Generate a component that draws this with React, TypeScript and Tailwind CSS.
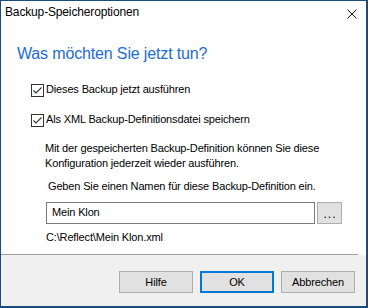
const Check = () => (
  <div className="w-[13px] h-[13px] border border-[#333333] bg-white flex items-center justify-center shrink-0 mt-[2px]">
    <svg width="11" height="11" viewBox="0 0 11 11">
      <path d="M1.5 5.5 L4 8 L9.5 2.5" fill="none" stroke="#333333" strokeWidth="1.1" />
    </svg>
  </div>
);

const Btn = ({ label, primary }: { label: string; primary?: boolean }) => (
  <button
    className={
      primary
        ? "w-[74px] h-[22px] bg-[#e1e1e1] border-2 border-[#0078d7] text-[11px] leading-[15px] tracking-[-0.15px] text-black"
        : "w-[74px] h-[22px] bg-[#e1e1e1] border border-[#adadad] text-[11px] leading-[15px] tracking-[-0.15px] text-black"
    }
  >
    {label}
  </button>
);

export default function App() {
  return (
    <div
      className="w-[368px] h-[308px] bg-[#1c4d7a] pl-px pt-px"
      style={{ fontFamily: '"Liberation Sans", Arial, sans-serif' }}
    >
      <div className="w-[365px] h-[305px] bg-white flex flex-col">
        {/* Title bar */}
        <div className="h-[30px] shrink-0 flex justify-between pl-[4px] pr-[9px] pt-[4px]">
          <span className="text-[12px] leading-[15px] tracking-[-0.15px] text-black">Backup-Speicheroptionen</span>
          <svg width="10" height="10" viewBox="0 0 10 10" className="mt-[4px]">
            <path d="M0.5 0.5 L9.5 9.5 M9.5 0.5 L0.5 9.5" stroke="#111111" strokeWidth="1" />
          </svg>
        </div>

        {/* Content */}
        <div className="h-[223px] shrink-0 pl-[16px] text-[11px] leading-[15px] tracking-[-0.15px] text-black">
          <h1 className="mt-[13px] text-[16px] leading-[20px] tracking-[-0.15px] text-[#1c6cd4]">Was möchten Sie jetzt tun?</h1>

          <div className="mt-[18px] ml-[14px] flex items-start">
            <Check />
            <span className="ml-[2px]">Dieses Backup jetzt ausführen</span>
          </div>
          <div className="mt-[15px] ml-[14px] flex items-start">
            <Check />
            <span className="ml-[2px]">Als XML Backup-Definitionsdatei speichern</span>
          </div>

          <p className="mt-[14px] ml-[28px]">
            Mit der gespeicherten Backup-Definition können Sie diese
            <br />
            Konfiguration jederzeit wieder ausführen.
          </p>

          <p className="mt-[8px] ml-[31px]">Geben Sie einen Namen für diese Backup-Definition ein.</p>

          <div className="mt-[8px] ml-[29px] flex gap-[2px]">
            <div className="w-[269px] h-[22px] border border-[#7a7a7a] bg-white flex items-center pl-[5px] pb-[2px]">
              Mein Klon
            </div>
            <button className="w-[25px] h-[22px] bg-[#e1e1e1] border border-[#adadad] flex items-end justify-center pb-[3px] pl-px text-[12px] leading-[12px] tracking-[1px]">
              ...
            </button>
          </div>

          <p className="mt-[6px] ml-[29px]">C:\Reflect\Mein Klon.xml</p>
        </div>

        <div className="w-[357px] h-px bg-[#a0a0a0] shrink-0" />

        {/* Footer */}
        <div className="flex-1 bg-[#f0f0f0] flex justify-end gap-[7px] pt-[16px] pr-[11px]">
          <Btn label="Hilfe" />
          <Btn label="OK" primary />
          <Btn label="Abbrechen" />
        </div>
      </div>
    </div>
  );
}
